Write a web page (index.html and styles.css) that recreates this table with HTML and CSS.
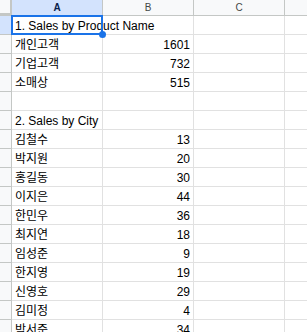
FILE: index.html
```html
<!DOCTYPE html>
<html lang="ko">
<head>
<meta charset="utf-8">
<link rel="stylesheet" href="styles.css">
</head>
<body>
<div class="sheet">
  <div class="corner"></div>
  <div class="colhead sel">A</div>
  <div class="colhead">B</div>
  <div class="colhead">C</div>
  <div class="colhead last"></div>

  <div class="rowhead sel"></div>
  <div class="cell active">1. Sales by Product Name<span class="handle"></span></div>
  <div class="cell"></div><div class="cell"></div><div class="cell last"></div>

  <div class="rowhead"></div><div class="cell">개인고객</div><div class="cell num">1601</div><div class="cell"></div><div class="cell last"></div>
  <div class="rowhead"></div><div class="cell">기업고객</div><div class="cell num">732</div><div class="cell"></div><div class="cell last"></div>
  <div class="rowhead"></div><div class="cell">소매상</div><div class="cell num">515</div><div class="cell"></div><div class="cell last"></div>
  <div class="rowhead"></div><div class="cell"></div><div class="cell"></div><div class="cell"></div><div class="cell last"></div>
  <div class="rowhead"></div><div class="cell">2. Sales by City</div><div class="cell"></div><div class="cell"></div><div class="cell last"></div>
  <div class="rowhead"></div><div class="cell">김철수</div><div class="cell num">13</div><div class="cell"></div><div class="cell last"></div>
  <div class="rowhead"></div><div class="cell">박지원</div><div class="cell num">20</div><div class="cell"></div><div class="cell last"></div>
  <div class="rowhead"></div><div class="cell">홍길동</div><div class="cell num">30</div><div class="cell"></div><div class="cell last"></div>
  <div class="rowhead"></div><div class="cell">이지은</div><div class="cell num">44</div><div class="cell"></div><div class="cell last"></div>
  <div class="rowhead"></div><div class="cell">한민우</div><div class="cell num">36</div><div class="cell"></div><div class="cell last"></div>
  <div class="rowhead"></div><div class="cell">최지연</div><div class="cell num">18</div><div class="cell"></div><div class="cell last"></div>
  <div class="rowhead"></div><div class="cell">임성준</div><div class="cell num">9</div><div class="cell"></div><div class="cell last"></div>
  <div class="rowhead"></div><div class="cell">한지영</div><div class="cell num">19</div><div class="cell"></div><div class="cell last"></div>
  <div class="rowhead"></div><div class="cell">신영호</div><div class="cell num">29</div><div class="cell"></div><div class="cell last"></div>
  <div class="rowhead"></div><div class="cell">김미정</div><div class="cell num">4</div><div class="cell"></div><div class="cell last"></div>
  <div class="rowhead"></div><div class="cell">박서준</div><div class="cell num">34</div><div class="cell"></div><div class="cell last"></div>
</div>
</body>
</html>
```
FILE: styles.css
```css
html, body {
  margin: 0;
  padding: 0;
  background: #ffffff;
  overflow: hidden;
}
.sheet {
  display: grid;
  grid-template-columns: 12px 91px 91px 91px 1fr;
  grid-template-rows: 16px;
  grid-auto-rows: 19px;
  width: 307px;
  height: 332px;
  overflow: hidden;
  font-family: "Liberation Sans", Arial, "Noto Sans CJK KR", sans-serif;
  font-size: 12px;
  color: #000000;
}
.corner {
  background: #f8f9fa;
  border-right: 3px solid #c4c7c5;
  border-bottom: 3px solid #c4c7c5;
  box-sizing: border-box;
  margin-right: -1px;
}
.colhead {
  box-sizing: border-box;
  background: #f8f9fa;
  border-right: 1px solid #c4c7c5;
  border-bottom: 1px solid #c4c7c5;
  font-size: 10px;
  color: #444746;
  text-align: center;
  line-height: 15px;
}
.colhead.sel {
  background: #d3e3fd;
  color: #0b1f4a;
  font-weight: bold;
}
.colhead.last { border-right: none; }
.rowhead {
  box-sizing: border-box;
  background: #f8f9fa;
  border-right: 1px solid #c4c7c5;
  border-bottom: 1px solid #c4c7c5;
}
.rowhead.sel { background: #d3e3fd; }
.cell {
  box-sizing: border-box;
  border-right: 1px solid #e1e1e1;
  border-bottom: 1px solid #e1e1e1;
  padding: 1px 3px 0 3px;
  line-height: 18px;
  white-space: nowrap;
  overflow: visible;
  position: relative;
}
.cell.last { border-right: none; }
.num { text-align: right; }
.active { z-index: 2; }
.active::after {
  content: "";
  position: absolute;
  left: -1px;
  top: -1px;
  right: -1px;
  bottom: -1px;
  border: 2px solid #1a73e8;
  pointer-events: none;
}
.handle {
  position: absolute;
  right: -4px;
  bottom: -4px;
  width: 7px;
  height: 7px;
  border-radius: 50%;
  background: #1a73e8;
  z-index: 3;
}
```
